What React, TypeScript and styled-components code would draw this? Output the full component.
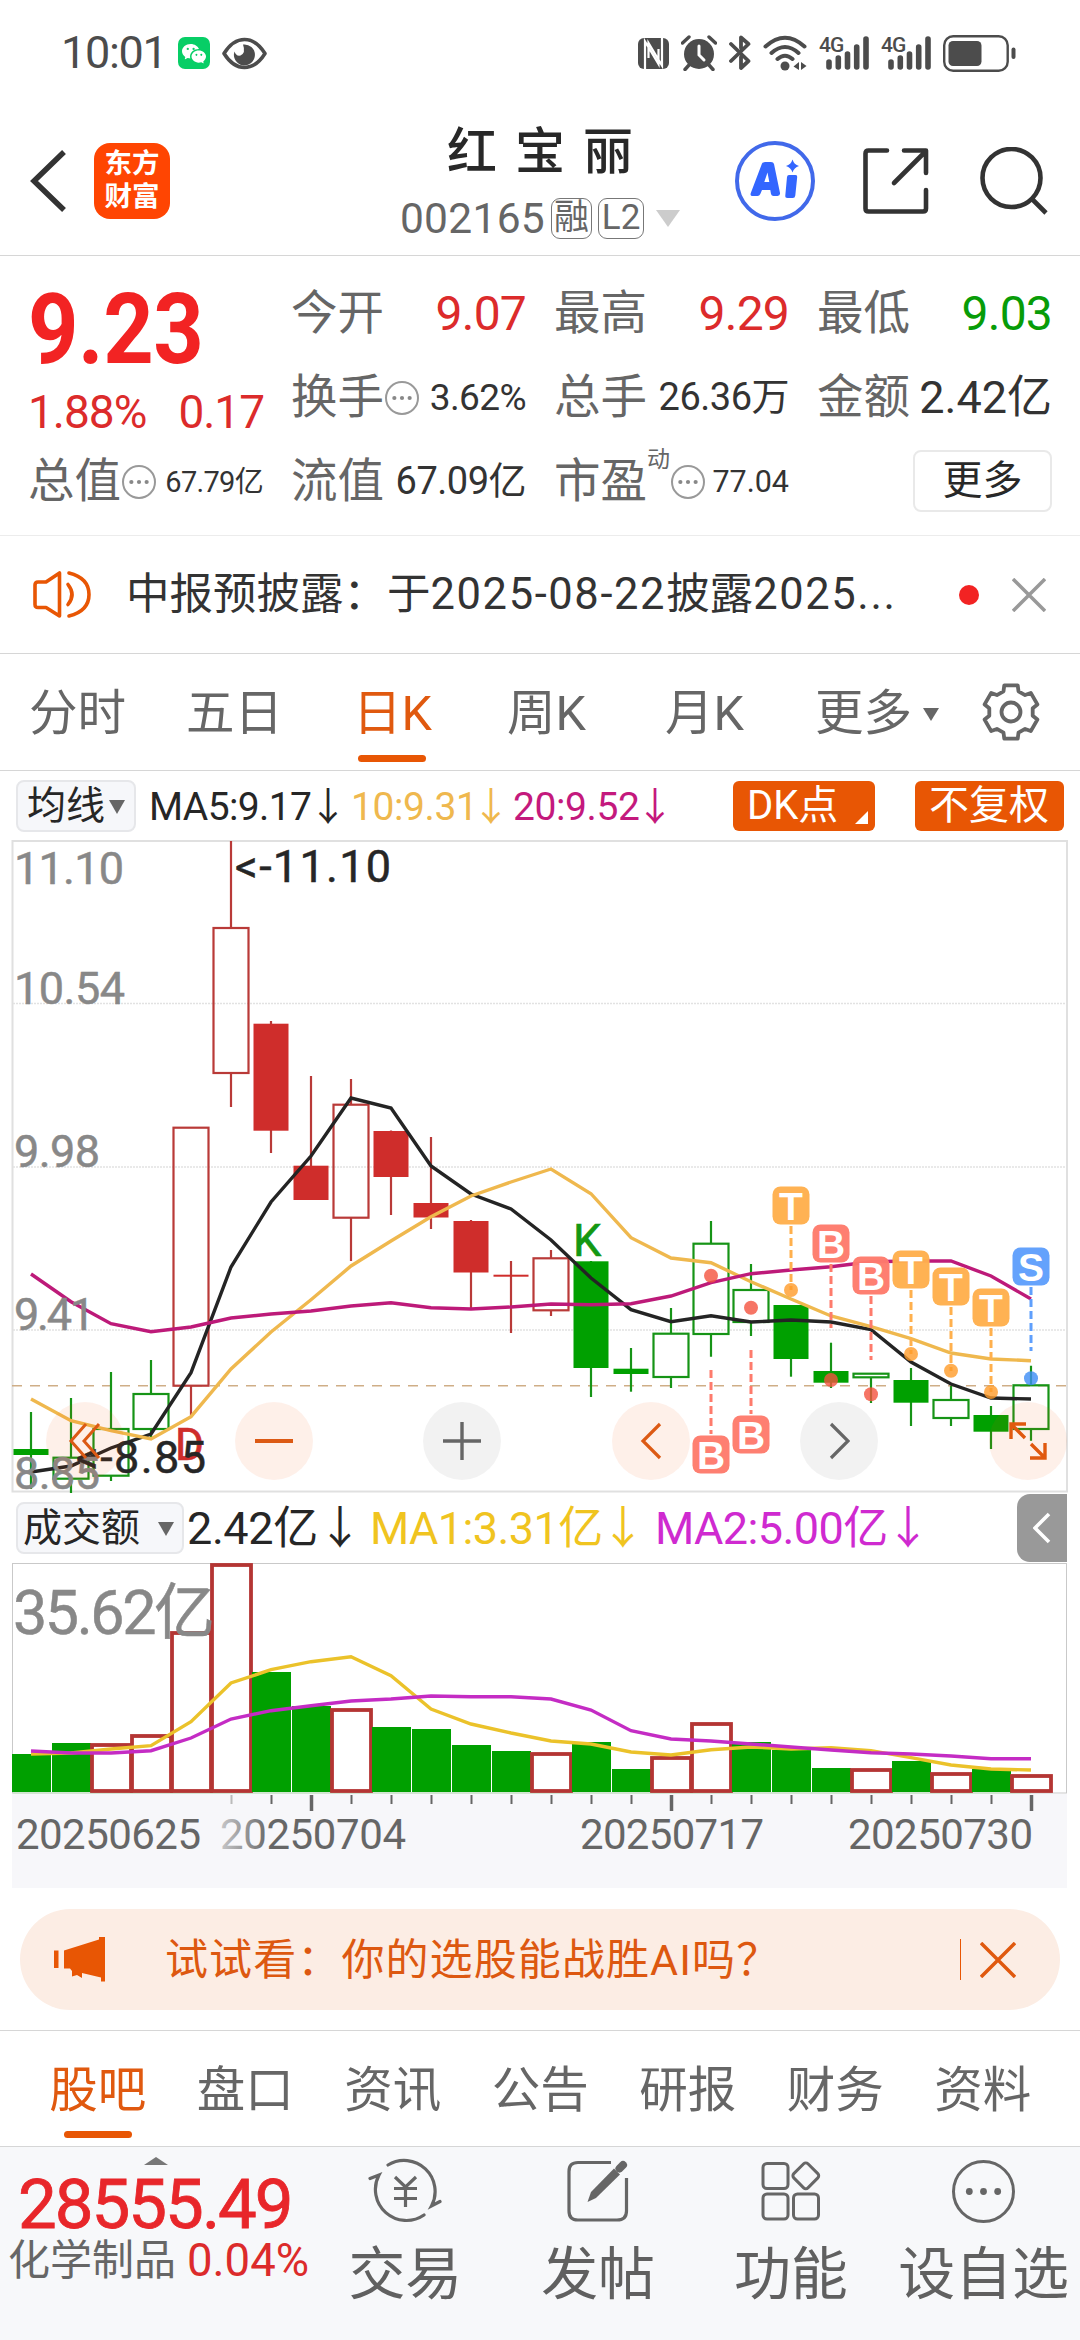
import React from 'react';
import styled, { createGlobalStyle } from 'styled-components';
import { BsWechat } from 'react-icons/bs';

const FONT = `Roboto, "Noto Sans CJK SC", sans-serif`;
const ORANGE = '#e85604';
const RED = '#cf2d2b';
const GREEN = '#00a000';
const GRAY = '#666666';

const Global = createGlobalStyle`
  * { box-sizing: border-box; }
  body { margin: 0; background: #fff; font-family: ${FONT}; color: #282828; }
  svg { display: block; flex: none; }
`;

const Screen = styled.main`
  width: 1080px;
  height: 2340px;
  display: flex;
  flex-direction: column;
  background: #fff;
  overflow: hidden;
`;

const Txt = styled.span<{ $s: number; $c?: string; $ls?: number; $w?: number; $b?: number }>`
  font-size: ${p => p.$s}px;
  color: ${p => p.$c || '#333'};
  letter-spacing: ${p => p.$ls || 0}px;
  font-weight: ${p => p.$b || 400};
  width: ${p => (p.$w ? `${p.$w}px` : 'auto')};
  line-height: 1.2;
  white-space: nowrap;
  flex: none;
`;

/* status bar */
const StatusBar = styled.header`
  height: 106px;
  display: flex;
  align-items: center;
  padding: 0 64px 0 61px;
`;
const Time = styled(Txt)`
  width: 117px;
`;
const WeChat = styled.span`
  width: 32px;
  height: 32px;
  border-radius: 7px;
  background: #07ce66;
  color: #fff;
  display: flex;
  align-items: center;
  justify-content: center;
  margin-right: 11px;
`;
const StatusRight = styled.div`
  margin-left: auto;
  display: flex;
  align-items: center;
  gap: 12px;
`;

/* title bar */
const TitleBar = styled.div`
  height: 150px;
  display: flex;
  border-bottom: 1px solid #d6d6d6;
`;
const BarSide = styled.div<{ $left?: boolean }>`
  width: 345px;
  display: flex;
  align-items: center;
  padding-left: ${p => (p.$left ? 30 : 0)}px;
`;
const AppLogo = styled.div`
  width: 76px;
  height: 76px;
  margin-left: 28px;
  border-radius: 16px;
  background: #ff4502;
  color: #fff;
  font-size: 27.5px;
  font-weight: 700;
  line-height: 33px;
  padding-top: 4px;
  text-align: center;
`;
const TitleMid = styled.div`
  flex: 1;
  display: flex;
  flex-direction: column;
  align-items: center;
  padding-top: 14px;
`;
const StockName = styled.h1`
  margin: 0;
  height: 60px;
  line-height: 65px;
  font-size: 50px;
  font-weight: 500;
  letter-spacing: 18px;
  padding-left: 18px;
`;
const CodeRow = styled.div`
  margin-top: 17px;
  height: 42px;
  display: flex;
  align-items: center;
`;
const Tag = styled.span<{ $w: number }>`
  width: ${p => p.$w}px;
  height: 41px;
  margin-left: 6px;
  border: 1.5px solid #777;
  border-radius: 9px;
  display: flex;
  align-items: center;
  justify-content: center;
  font-size: 35px;
  line-height: 38px;
  color: ${GRAY};
`;
const IconGap = styled.span<{ $w: number }>`
  width: ${p => p.$w}px;
`;

/* quote */
const Quote = styled.section`
  height: 280px;
  padding: 16px 0 0 28px;
  display: grid;
  grid-template-columns: repeat(4, 263px);
  grid-template-rows: repeat(3, 84px);
  border-bottom: 1px solid #ececec;
`;
const Price = styled.div`
  grid-row: 1 / span 2;
  padding-top: 15px;
`;
const BigPrice = styled.div`
  height: 84px;
  line-height: 84px;
  font-size: 99px;
  font-weight: 700;
  letter-spacing: -0.5px;
  transform: scaleX(0.89);
  transform-origin: 0 50%;
  color: #f22323;
`;
const Change = styled.div`
  height: 68px;
  line-height: 82px;
  display: flex;
  gap: 32px;
  font-size: 46px;
  letter-spacing: -1px;
  color: #dc2b2b;
`;
const Stat = styled.div`
  width: 235px;
  display: flex;
  align-items: center;
  & > :last-child {
    margin-left: auto;
  }
`;
const Sup = styled(Txt)`
  align-self: flex-start;
  margin-top: 6px;
`;
const MoreBtn = styled.button`
  width: 139px;
  height: 62px;
  margin-top: -3px;
  border: 2px solid #e9e9e9;
  border-radius: 8px;
  background: #fff;
  font: 40px/58px ${FONT};
  color: #282828;
  padding: 0;
`;

/* notice */
const Notice = styled.section`
  height: 118px;
  display: flex;
  align-items: center;
  padding: 0 34px 0 33px;
  border-bottom: 1px solid #d6d6d6;
`;
const NoticeText = styled(Txt)`
  margin: 1px 0 0 35px;
`;
const Spaced = styled.span`
  letter-spacing: 1.6px;
`;
const RedDot = styled.i`
  width: 20px;
  height: 20px;
  border-radius: 50%;
  background: #f22323;
  margin: 0 33px 0 auto;
`;

/* tabs */
const Tabs = styled.nav<{ $pad: number }>`
  height: 117px;
  display: flex;
  padding-left: ${p => p.$pad}px;
  border-bottom: 1px solid #d6d6d6;
`;
const Tab = styled.div<{ $w: number; $on?: boolean; $center?: boolean; $top?: number }>`
  width: ${p => p.$w}px;
  position: relative;
  display: flex;
  align-items: center;
  justify-content: ${p => (p.$center ? 'center' : 'flex-start')};
  font-size: 48.5px;
  line-height: 1.2;
  color: ${p => (p.$on ? '#e0590f' : GRAY)};
  padding-top: ${p => (p.$top === undefined ? 5 : p.$top)}px;
`;
const Underline = styled.i<{ $l: number }>`
  position: absolute;
  left: ${p => p.$l}px;
  bottom: 8px;
  width: 68px;
  height: 7px;
  border-radius: 4px;
  background: ${ORANGE};
`;

/* indicator strips */
const Strip = styled.div`
  height: 69px;
  display: flex;
  align-items: center;
  padding-left: 16px;
`;
const Pill = styled.div<{ $w: number; $gap: number }>`
  width: ${p => p.$w}px;
  height: 52px;
  border: 2px solid #e6e7ea;
  border-radius: 8px;
  background: #f6f7fa;
  padding: 2px 0 0 ${p => (p.$w > 140 ? 5 : 9)}px;
  display: flex;
  align-items: center;
  gap: ${p => p.$gap}px;
`;
const Reading = styled.div<{ $c: string; $w: number; $s: number; $ml: number; $ls: number }>`
  width: ${p => p.$w}px;
  margin-left: ${p => p.$ml}px;
  padding-top: 3px;
  display: flex;
  align-items: center;
  justify-content: space-between;
  color: ${p => p.$c};
  font-size: ${p => p.$s}px;
  letter-spacing: ${p => p.$ls}px;
  line-height: 1.2;
  white-space: nowrap;
`;
const DownMark = styled.span`
  width: 22px;
  display: flex;
  justify-content: center;
  letter-spacing: 0;
`;
const FlagBtn = styled.button<{ $w: number; $ml: string; $pad: number }>`
  position: relative;
  width: ${p => p.$w}px;
  height: 50px;
  margin-left: ${p => p.$ml};
  padding: 0 0 0 ${p => p.$pad}px;
  border: 0;
  border-radius: 6px;
  background: ${ORANGE};
  color: #fff;
  text-align: left;
  font: 40px/50px ${FONT};
  white-space: nowrap;
`;
const Corner = styled.i`
  position: absolute;
  right: 7px;
  bottom: 7px;
  border-left: 13px solid transparent;
  border-bottom: 13px solid #fff;
`;
const SideHandle = styled.div`
  width: 50px;
  height: 68px;
  margin: 1px 13px 0 auto;
  border-radius: 13px 0 0 13px;
  background: #999;
  display: flex;
  align-items: center;
  justify-content: center;
`;

/* chart */
const ChartArea = styled.section`
  position: relative;
  height: 653px;
`;
const Controls = styled.div`
  position: absolute;
  left: 46px;
  width: 1021px;
  top: 562px;
  display: flex;
  justify-content: space-between;
`;
const RoundBtn = styled.button<{ $gray?: boolean }>`
  width: 78px;
  height: 78px;
  border: 0;
  padding: 0;
  border-radius: 50%;
  background: ${p => (p.$gray ? 'rgba(0,0,0,.05)' : 'rgba(240,86,4,.085)')};
  display: flex;
  align-items: center;
  justify-content: center;
`;

/* banner */
const Banner = styled.section`
  height: 101px;
  margin: 21px 20px 20px;
  border-radius: 51px;
  background: #fcede4;
  display: flex;
  align-items: center;
  padding: 0 44px 0 33px;
`;
const BannerText = styled(Txt)`
  margin: 2px 0 0 59px;
`;
const BannerRule = styled.i`
  width: 1px;
  height: 41px;
  background: ${ORANGE};
  margin: 0 19px 0 auto;
`;
const LowerTabs = styled(Tabs)`
  border-top: 1px solid #d6d6d6;
`;

/* bottom bar */
const BottomBar = styled.footer`
  flex: 1;
  background: #f7f8fa;
  display: flex;
`;
const IndexBox = styled.div`
  width: 309px;
  padding-left: 8px;
  display: flex;
  flex-direction: column;
`;
const IndexTop = styled.div`
  height: 18px;
  padding: 10px 0 0 136px;
`;
const IndexValue = styled.div`
  height: 76px;
  line-height: 79px;
  font-size: 69px;
  letter-spacing: -2px;
  color: #e8262a;
  -webkit-text-stroke: 0.8px #e8262a;
  padding-left: 10px;
`;
const IndexName = styled.div`
  height: 40px;
  display: flex;
  align-items: center;
  gap: 11px;
`;
const Action = styled.div`
  width: 193px;
  display: flex;
  flex-direction: column;
  align-items: center;
  padding-top: 8px;
  font-size: 57px;
  line-height: 70px;
  color: #606060;
  white-space: nowrap;
`;
const ActionIcon = styled.div`
  height: 72px;
  margin-bottom: 13px;
  display: flex;
  align-items: center;
`;

const Dots = ({ r = 17, w = 2 }: { r?: number; w?: number }) => (
  <svg width={r * 2 + 2} height={r * 2 + 2} viewBox={`${-r - 1} ${-r - 1} ${r * 2 + 2} ${r * 2 + 2}`}>
    <circle r={r - w / 2} fill="none" stroke={r > 20 ? GRAY : '#999'} strokeWidth={w} />
    {[-1, 0, 1].map(i => (
      <circle key={i} cx={i * r * 0.45} r={r > 20 ? 3.4 : 2.1} fill={r > 20 ? GRAY : '#888'} />
    ))}
  </svg>
);
const Tri = ({ w = 16, h = 14, c = GRAY }: { w?: number; h?: number; c?: string }) => (
  <svg width={w} height={h}>
    <path d={`M0 0H${w}L${w / 2} ${h}Z`} fill={c} />
  </svg>
);
const Cross = ({ s, c, w }: { s: number; c: string; w: number }) => (
  <svg width={s} height={s} fill="none" stroke={c} strokeWidth={w}>
    <path d={`M1 1L${s - 1} ${s - 1}M${s - 1} 1L1 ${s - 1}`} />
  </svg>
);
const SignalIcon = () => (
  <svg width="50" height="43" viewBox="0 -4 50 43" fontFamily="Roboto">
    <text x="0" y="16" fontSize="21" fontWeight="500" fill="#4c4c4c" letterSpacing="-1">
      4G
    </text>
    <g stroke="#4c4c4c" strokeWidth="5.6" strokeLinecap="round">
      <path d="M10 26V31M19.3 22V31M28.5 18V31M37.7 11V31M47 3V31" />
    </g>
  </svg>
);

const cx = (i: number) => 31 + 40 * i;
// [colour, hollow, high, low, top, bottom]
const candles: [string, number, number, number, number, number][] = [
  ['g', 0, 1413, 1490, 1450, 1456],
  ['g', 1, 1399, 1494, 1458.7, 1479.7],
  ['g', 1, 1373, 1482, 1430, 1476.7],
  ['g', 1, 1361, 1440, 1395, 1430],
  ['r', 1, 1128.7, 1417, 1128.7, 1386.7],
  ['r', 1, 842, 1108, 929, 1074],
  ['r', 0, 1022, 1154, 1024.7, 1131.7],
  ['r', 0, 1077, 1201, 1166.7, 1201],
  ['r', 1, 1080, 1262, 1105.7, 1218.7],
  ['r', 0, 1131.5, 1216, 1132, 1178],
  ['r', 0, 1138, 1230, 1204, 1218.5],
  ['r', 0, 1221, 1310, 1222, 1273.5],
  ['r', 0, 1262, 1334, 1275.7, 1277.7],
  ['r', 1, 1251, 1317, 1259.3, 1311.3],
  ['g', 0, 1262, 1398, 1262.3, 1369],
  ['g', 0, 1349, 1392.7, 1369.7, 1375],
  ['g', 1, 1309, 1389, 1334.7, 1378],
  ['g', 1, 1222, 1357.7, 1244.7, 1335],
  ['g', 1, 1265, 1337, 1291, 1323],
  ['g', 0, 1306, 1377.7, 1306, 1360],
  ['g', 0, 1343.7, 1389, 1372, 1383.7],
  ['g', 1, 1374.7, 1404, 1374.7, 1378.3],
  ['g', 0, 1369, 1427, 1381, 1403.7],
  ['g', 1, 1387, 1427, 1401, 1419],
  ['g', 0, 1407, 1450, 1416, 1432.7],
  ['g', 1, 1366.7, 1441.7, 1386.3, 1430],
];
const ma5 = [1473, 1467, 1449, 1435, 1373.7, 1268, 1203, 1157, 1099, 1109, 1167, 1195, 1210, 1241, 1279, 1310.7, 1322.7, 1316.7, 1323, 1321, 1323, 1330.7, 1363, 1385, 1399, 1400];
const ma10 = [1400, 1421.7, 1431.7, 1440, 1417.7, 1370, 1333, 1300.7, 1267, 1242, 1217.7, 1197, 1183, 1170, 1194.7, 1238.7, 1259, 1263.7, 1282.7, 1300, 1317, 1327.7, 1339.7, 1354, 1360, 1361.7];
const ma20 = [1275, 1302.7, 1324.7, 1332.7, 1328, 1319, 1315, 1312, 1307, 1303.7, 1308.7, 1310, 1308, 1305, 1305.7, 1304.7, 1297, 1283.7, 1274.7, 1271, 1267.7, 1262.7, 1262, 1262, 1277, 1300];
const vol: [string, number][] = [
  ['g', 1755], ['g', 1744], ['r', 1744], ['r', 1735], ['r', 1632], ['r', 1564], ['g', 1673], ['g', 1707], ['r', 1709],
  ['g', 1728], ['g', 1730], ['g', 1746], ['g', 1752], ['r', 1753], ['g', 1743], ['g', 1770], ['r', 1757], ['r', 1723],
  ['g', 1743], ['g', 1751], ['g', 1769], ['r', 1769], ['g', 1762], ['r', 1773], ['g', 1770], ['r', 1775],
];
const vma1 = [1755, 1754, 1750, 1746.7, 1722.7, 1684, 1670.7, 1662.7, 1657.7, 1676.7, 1710, 1725, 1734, 1742, 1745, 1753, 1756, 1750.7, 1748, 1750, 1748.7, 1751.7, 1758.7, 1766, 1770, 1771];
const vma2 = [1752, 1754, 1754, 1751.7, 1739, 1720, 1711.7, 1706.7, 1702, 1700, 1697, 1697.7, 1697.7, 1700, 1711, 1731.7, 1740, 1742, 1745, 1748, 1751, 1753.7, 1755, 1757, 1759.7, 1759.7];
const pts = (a: number[]) => a.map((y, i) => `${cx(i)},${y}`).join(' ');

// [letter, candle index, badge centre y, dash start, dash end, dot y]
const marks: [string, number, number, number, number, number][] = [
  ['T', 19, 1206.5, 1227, 1291, 1291],
  ['B', 20, 1244.5, 1265, 1329, 1381],
  ['B', 21, 1276.5, 1297, 1361, 1395.3],
  ['T', 22, 1270.5, 1291, 1355, 1355],
  ['T', 23, 1287.5, 1308, 1372, 1371.7],
  ['T', 24, 1308.5, 1329, 1393, 1393],
  ['S', 25, 1267.5, 1288, 1352, 1379.3],
  ['B', 17, 1455.5, 1371, 1435, 1276.7],
  ['B', 18, 1435.5, 1351, 1415, 1308.7],
];
const markColor: Record<string, [string, string]> = {
  T: ['#ffb04d', '#ff9b28'],
  B: ['#fe7b6c', '#f4523f'],
  S: ['#5f9ffc', '#3c8cf5'],
};
const labels: [string, number, number][] = [
  ['11.10', 885, 107], ['10.54', 1005, 108], ['9.98', 1168, 83], ['9.41', 1331, 78], ['8.85', 1490, 83],
];

const PriceChart = () => (
  <svg width="1080" height="653" viewBox="0 841 1080 653" fontFamily={FONT}>
    <rect x="12.5" y="842" width="1054.5" height="650.5" fill="none" stroke="#e0e0e0" strokeWidth="2" />
    {[1004.5, 1168, 1331].map(y => (
      <path key={y} d={`M13 ${y}H1066`} stroke="#e2e2e2" strokeWidth="1.3" strokeDasharray="2 1" />
    ))}
    <path d="M12 1386.7H1067" stroke="#cfae87" strokeWidth="1.6" strokeDasharray="10 8" />
    {candles.map(([c, hollow, hi, lo, t, b], i) => {
      const col = c === 'g' ? '#169416' : '#b93a38';
      return (
        <g key={i}>
          <path d={hollow ? `M${cx(i)} ${hi}V${t}M${cx(i)} ${b}V${lo}` : `M${cx(i)} ${hi}V${lo}`} stroke={col} strokeWidth="2.2" />
          {hollow ? (
            <rect x={cx(i) - 17.5} y={t} width="35" height={b - t} fill="none" stroke={col} strokeWidth="2.2" />
          ) : (
            <rect x={cx(i) - 17.5} y={t} width="35" height={b - t} fill={c === 'g' ? GREEN : RED} />
          )}
        </g>
      );
    })}
    <g fill="none" strokeWidth="3.4">
      <polyline points={pts(ma5)} stroke="#242424" />
      <polyline points={pts(ma10)} stroke="#efb84e" />
      <polyline points={pts(ma20)} stroke="#bd1a79" />
    </g>
    <text x="175" y="1461" fontSize="44" fill={RED} stroke={RED} strokeWidth="0.7">D</text>
    <text x="573" y="1257" fontSize="45" fill="#139813" stroke="#139813" strokeWidth="0.7">K</text>
    {marks.map(([l, i, y, a, b, d]) => (
      <g key={i}>
        <path d={`M${cx(i)} ${a}V${b}`} stroke={markColor[l][0]} strokeWidth="3" strokeDasharray="8 4" />
        <circle cx={cx(i)} cy={d} r="7" fill={markColor[l][1]} opacity=".8" />
        <rect x={cx(i) - 18.5} y={y - 19} width="37" height="38" rx="8" fill={markColor[l][0]} fillOpacity=".97" />
        <text x={cx(i)} y={y + 14} fontSize="39" fontWeight="700" fill="#fff" textAnchor="middle" fontFamily="Liberation Sans">
          {l}
        </text>
      </g>
    ))}
    {labels.map(([t, y, w]) => (
      <text key={t} x="14" y={y} fontSize="45" fill="#888" stroke="#888" strokeWidth="0.5" textLength={w + 3}>
        {t}
      </text>
    ))}
    <g fill="#262626" stroke="#262626" strokeWidth="0.5" fontSize="45">
      <text x="235" y="883" textLength="156">&lt;-11.10</text>
      <text x="76" y="1474" textLength="130">&lt;-8.85</text>
    </g>
  </svg>
);

const VolumeChart = () => (
  <svg width="1080" height="326" viewBox="0 1563 1080 326" fontFamily={FONT}>
    <defs>
      <linearGradient id="fade" gradientUnits="userSpaceOnUse" x1="218" y1="0" x2="270" y2="0">
        <stop offset="0" stopColor="#666" stopOpacity=".3" />
        <stop offset="1" stopColor="#666" />
      </linearGradient>
    </defs>
    <rect x="12" y="1795" width="1055" height="94" fill="#f7f7fa" />
    <rect x="12.5" y="1564.5" width="1054" height="229.5" fill="#fff" stroke="#c9c9c9" />
    <path d="M13 1794H1031" stroke="#bfe6bf" />
    {vol.map(([c, t], i) =>
      c === 'g' ? (
        <rect key={i} x={cx(i) - 19} y={t} width="39" height={1793 - t} fill={GREEN} />
      ) : (
        <rect key={i} x={cx(i) - 19} y={t + 2} width="39" height={1792 - t - 2} fill="#fff" stroke="#b43533" strokeWidth="3.8" />
      ),
    )}
    <g fill="none" strokeWidth="3.4">
      <polyline points={pts(vma1)} stroke="#ebc22a" />
      <polyline points={pts(vma2)} stroke="#c42cc4" />
    </g>
    <text x="13" y="1635" fontSize="61" fill="#888" stroke="#888" strokeWidth="0.5" textLength="202">35.62亿</text>
    {vol.map((_, i) => {
      if (i < 5) return null;
      const major = i === 7 || i === 16 || i === 25;
      return <path key={i} d={`M${cx(i) + 0.5} 1796V${major ? 1812 : 1805}`} stroke={i === 5 ? '#bbb' : GRAY} strokeWidth={major ? 3.5 : 2} />;
    })}
    <g fontSize="42" fill={GRAY}>
      <text x="16" y="1850" textLength="185">20250625</text>
      <text x="220" y="1850" textLength="186" fill="url(#fade)">20250704</text>
      <text x="580" y="1850" textLength="184">20250717</text>
      <text x="848" y="1850" textLength="185">20250730</text>
    </g>
  </svg>
);

const gearPath = (() => {
  const out: string[] = [];
  for (let k = 0; k < 6; k++) {
    const base = -90 + k * 60;
    [[-14, 27.5], [14, 27.5], [20, 22], [40, 22]].forEach(([da, r]) => {
      const a = ((base + da) * Math.PI) / 180;
      out.push(`${(30 + r * Math.cos(a)).toFixed(1)} ${(30 + r * Math.sin(a)).toFixed(1)}`);
    });
  }
  return `M${out.join('L')}Z`;
})();

export default function App() {
  return (
    <Screen>
      <Global />
      <StatusBar>
        <Time $s={45} $c="#4c4c4c" $ls={-1.3}>10:01</Time>
        <WeChat><BsWechat size={24} /></WeChat>
        <svg width="47" height="33" viewBox="0 0 47 33">
          <path d="M3 16.5C9 7 16 2.500 23.500 2.500S38 7 44 16.500C38 26 31 30.500 23.500 30.500S9 26 3 16.500Z" fill="none" stroke="#4c4c4c" strokeWidth="3.600" strokeLinejoin="round" />
          <path d="M22 7.500A10.500 10.500 0 1 1 13.500 14.500Q15 19.500 19.500 18.500Q25 16 22 7.500Z" fill="#4c4c4c" />
        </svg>
        <StatusRight>
          <svg width="31" height="33" viewBox="0 0 31 33">
            <rect y="1" width="31" height="31" rx="6" fill="#4c4c4c" />
            <path d="M7 33V4.500L20.500 27V12M24 0V28.500L10.500 6V21" fill="none" stroke="#fff" strokeWidth="2.200" />
          </svg>
          <svg width="36" height="36" viewBox="0 0 36 36">
            <circle cx="18" cy="19" r="15" fill="#4c4c4c" />
            <path d="M18 11V20L23 25" stroke="#fff" strokeWidth="3" fill="none" strokeLinecap="round" />
            <path d="M1.500 8L8 2M34.500 8L28 2M8 30L4 34.500M28 30L32 34.500" stroke="#4c4c4c" strokeWidth="3.400" strokeLinecap="round" />
          </svg>
          <svg width="22" height="36" viewBox="0 0 22 36" fill="none" stroke="#4c4c4c" strokeWidth="3.800" strokeLinecap="round" strokeLinejoin="round">
            <path d="M2 9L19.500 26L12 33V22M2 26L19.500 9L12 2.500V13" />
          </svg>
          <svg width="44" height="36" viewBox="0 0 44 36" fill="none" stroke="#4c4c4c" strokeWidth="4" strokeLinecap="round">
            <path d="M2.500 11.500Q22 -6 41.500 11.500M8.500 18Q22 6 35.500 18M14.500 24Q22 17.500 29.500 24" />
            <circle cx="22" cy="31" r="4.500" fill="#4c4c4c" stroke="none" />
            <path d="M36 27V35L30.500 31.500ZM38 27V35L43.500 31Z" fill="#4c4c4c" stroke="none" />
          </svg>
          <SignalIcon />
          <SignalIcon />
          <svg width="73" height="37" viewBox="0 0 73 37">
            <rect x="1.200" y="1.200" width="63.500" height="34.500" rx="9" fill="none" stroke="#4c4c4c" strokeWidth="2.400" />
            <rect x="5.500" y="6" width="33" height="25" rx="4.500" fill="#4c4c4c" />
            <rect x="68.500" y="12.500" width="4" height="11.500" rx="2" fill="#4c4c4c" />
          </svg>
        </StatusRight>
      </StatusBar>

      <TitleBar>
        <BarSide $left>
          <svg width="36" height="64" viewBox="0 0 36 64" fill="none" stroke="#333" strokeWidth="5.500">
            <path d="M34 3L4 32L34 61" />
          </svg>
          <AppLogo>东方<br />财富</AppLogo>
        </BarSide>
        <TitleMid>
          <StockName>红宝丽</StockName>
          <CodeRow>
            <Txt $s={42.5} $c={GRAY} $ls={0.3}>002165</Txt>
            <Tag $w={41}>融</Tag>
            <Tag $w={46}>L2</Tag>
            <IconGap $w={12} />
            <Tri w={24} h={17} c="#ccc" />
          </CodeRow>
        </TitleMid>
        <BarSide>
          <svg width="80" height="80" viewBox="0 0 80 80">
            <circle cx="40" cy="40" r="38" fill="none" stroke="#4169ea" strokeWidth="4" />
            <path d="M27 22.500Q28 21 30 21H36Q38.500 21 39 23L45 52Q45.300 55 42.500 55H38.500Q36.500 55 36 53L35.300 49H27L25.300 53Q24.500 55 22.500 55H17.500Q14.800 55 15.800 52ZM32.500 31.500L29.300 41H34.300Z" fill="#3366ff" fillRule="evenodd" />
            <path d="M54 34H60.500Q62.500 34 62.200 36L60.300 54.500Q60 57 57.800 57H52.500Q50 57 50.300 54.500L52 36Q52.200 34 54 34Z" fill="#3366ff" />
            <path d="M57.500 18.500Q59 23.500 64 25Q59 26.500 57.500 31.500Q56 26.500 51 25Q56 23.500 57.500 18.500Z" fill="#3366ff" />
          </svg>
          <IconGap $w={48} />
          <svg width="66" height="66" viewBox="0 0 66 66" fill="none" stroke="#333" strokeWidth="4.600" strokeLinecap="round" strokeLinejoin="round">
            <path d="M24 2.500H5.500Q2.500 2.500 2.500 5.500V60.500Q2.500 63.500 5.500 63.500H60Q63 63.500 63 60.500V42M41 2.500H63V25M62 4L31 35" />
          </svg>
          <IconGap $w={51} />
          <svg width="68" height="68" viewBox="0 0 68 68" fill="none" stroke="#333" strokeWidth="4.600">
            <circle cx="31.500" cy="31" r="29" />
            <path d="M51 51L66 66" />
          </svg>
        </BarSide>
      </TitleBar>

      <Quote>
        <Price>
          <BigPrice>9.23</BigPrice>
          <Change><span>1.88%</span><span>0.17</span></Change>
        </Price>
        <Stat><Txt $s={46.5} $c={GRAY}>今开</Txt><Txt $s={48} $ls={-0.8} $c="#dc2b2b">9.07</Txt></Stat>
        <Stat><Txt $s={46.5} $c={GRAY}>最高</Txt><Txt $s={48} $ls={-0.8} $c="#dc2b2b">9.29</Txt></Stat>
        <Stat><Txt $s={46.5} $c={GRAY}>最低</Txt><Txt $s={48} $ls={-0.8} $c="#089c08">9.03</Txt></Stat>
        <Stat><Txt $s={46.5} $c={GRAY}>换手</Txt><Dots /><Txt $s={37} $ls={-0.6}>3.62%</Txt></Stat>
        <Stat><Txt $s={46.5} $c={GRAY}>总手</Txt><Txt $s={38} $ls={-0.5}>26.36万</Txt></Stat>
        <Stat><Txt $s={46.5} $c={GRAY}>金额</Txt><Txt $s={45}>2.42亿</Txt></Stat>
        <Stat><Txt $s={46.5} $c={GRAY}>总值</Txt><Dots /><Txt $s={29} $ls={-0.7}>67.79亿</Txt></Stat>
        <Stat><Txt $s={46.5} $c={GRAY}>流值</Txt><Txt $s={38} $ls={-0.5}>67.09亿</Txt></Stat>
        <Stat><Txt $s={46.5} $c={GRAY}>市盈</Txt><Sup $s={23} $c={GRAY}>动</Sup><Dots /><Txt $s={30.5}>77.04</Txt></Stat>
        <Stat><MoreBtn>更多</MoreBtn></Stat>
      </Quote>

      <Notice>
        <svg width="58" height="50" viewBox="0 0 58 50" fill="none" stroke={ORANGE} strokeWidth="3.600" strokeLinejoin="round" strokeLinecap="round">
          <path d="M26.500 3V46L13 37.500H5Q2 37.500 2 34.500V15Q2 12 5 12H13Z" />
          <path d="M35 14.500Q43 24.500 35 34.500M36 3Q56 8 56 24.500T36 46" />
        </svg>
        <NoticeText $s={43.5}>中报预披露：于<Spaced>2025-08-22</Spaced>披露<Spaced>2025...</Spaced></NoticeText>
        <RedDot />
        <Cross s={34} c="#999" w={3.5} />
      </Notice>

      <Tabs $pad={29}>
        <Tab $w={157}>分时</Tab>
        <Tab $w={167}>五日</Tab>
        <Tab $w={154} $on>日K<Underline $l={5} /></Tab>
        <Tab $w={158}>周K</Tab>
        <Tab $w={150}>月K</Tab>
        <Tab $w={166}>更多<IconGap $w={11} /><Tri w={16} h={13} /></Tab>
        <Tab $w={60} $top={0}>
          <svg width="60" height="60" viewBox="0 0 60 60" fill="none" stroke={GRAY} strokeWidth="3.800" strokeLinejoin="round">
            <path d={gearPath} />
            <circle cx="30" cy="30" r="9.500" />
          </svg>
        </Tab>
      </Tabs>

      <Strip>
        <Pill $w={120} $gap={4}><Txt $s={39} $c="#262626">均线</Txt><Tri /></Pill>
        <Reading $c="#262626" $w={190} $s={39} $ml={13} $ls={-0.6}>MA5:9.17<DownMark>↓</DownMark></Reading>
        <Reading $c="#efb84e" $w={151} $s={39} $ml={12} $ls={-0.4}>10:9.31<DownMark>↓</DownMark></Reading>
        <Reading $c="#c4197d" $w={153} $s={39} $ml={11} $ls={-0.4}>20:9.52<DownMark>↓</DownMark></Reading>
        <FlagBtn $w={142} $ml="67px" $pad={14}>DK点<Corner /></FlagBtn>
        <FlagBtn $w={149} $ml="40px" $pad={14}>不复权</FlagBtn>
      </Strip>

      <ChartArea>
        <PriceChart />
        <Controls>
          <RoundBtn>
            <svg width="34" height="38" viewBox="0 0 34 38" fill="none" stroke="#dc5a14" strokeWidth="3">
              <path d="M18 2L3 19L18 36M31 2L16 19L31 36" />
            </svg>
          </RoundBtn>
          <RoundBtn><svg width="38" height="4"><path d="M0 2H38" stroke="#dc5a14" strokeWidth="4" /></svg></RoundBtn>
          <RoundBtn $gray><svg width="38" height="38"><path d="M0 19H38M19 0V38" stroke={GRAY} strokeWidth="3.400" /></svg></RoundBtn>
          <RoundBtn><svg width="22" height="38" fill="none"><path d="M20 2L3 19L20 36" stroke="#dc5a14" strokeWidth="3.200" /></svg></RoundBtn>
          <RoundBtn $gray><svg width="22" height="38" fill="none"><path d="M3 2L20 19L3 36" stroke={GRAY} strokeWidth="3.200" /></svg></RoundBtn>
          <RoundBtn>
            <svg width="38" height="38" viewBox="0 0 38 38" fill="none" stroke="#e0590f" strokeWidth="3.400">
              <path d="M2 17V2H17M3 3L16 16M36 21V36H21M35 35L22 22" />
            </svg>
          </RoundBtn>
        </Controls>
      </ChartArea>

      <Strip>
        <Pill $w={168} $gap={18}><Txt $s={39} $c="#262626">成交额</Txt><Tri /></Pill>
        <Reading $c="#262626" $w={164} $s={45} $ml={3} $ls={-0.4}>2.42亿<DownMark>↓</DownMark></Reading>
        <Reading $c="#f0c41f" $w={264} $s={45} $ml={19} $ls={-0.6}>MA1:3.31亿<DownMark>↓</DownMark></Reading>
        <Reading $c="#cf2ad0" $w={264} $s={45} $ml={21} $ls={-0.6}>MA2:5.00亿<DownMark>↓</DownMark></Reading>
        <SideHandle>
          <svg width="18" height="32" fill="none"><path d="M16 2L2 16L16 30" stroke="#fff" strokeWidth="3.600" /></svg>
        </SideHandle>
      </Strip>
      <VolumeChart />

      <Banner>
        <svg width="53" height="46" viewBox="0 0 53 46" fill={ORANGE}>
          <path d="M1 13.500H5.500V31H1ZM11 13.500L46 2.500V0H52V44.500H48V40.500L29 36V41L24 38L19 39.500V34L17 31.500H11Z" />
        </svg>
        <BannerText $s={43} $ls={1.1} $c="#dd5810">试试看：你的选股能战胜AI吗？</BannerText>
        <BannerRule />
        <Cross s={36} c="#e0590f" w={3.5} />
      </Banner>

      <LowerTabs $pad={24}>
        {['股吧', '盘口', '资讯', '公告', '研报', '财务', '资料'].map((t, i) => (
          <Tab key={t} $w={147.5} $center $on={i === 0}>
            {t}
            {i === 0 && <Underline $l={40} />}
          </Tab>
        ))}
      </LowerTabs>

      <BottomBar>
        <IndexBox>
          <IndexTop>
            <svg width="24" height="8"><path d="M0 8L12 0L24 8Z" fill="#777" /></svg>
          </IndexTop>
          <IndexValue>28555.49</IndexValue>
          <IndexName>
            <Txt $s={42} $c={GRAY}>化学制品</Txt>
            <Txt $s={45.5} $c="#dc2b2b">0.04%</Txt>
          </IndexName>
        </IndexBox>
        <Action>
          <ActionIcon>
            <svg width="74" height="66" viewBox="0 0 74 66" fill="none" stroke={GRAY} strokeWidth="3.200" strokeLinecap="round">
              <path d="M20 7A31 31 0 0 1 63.500 48L72 43.500M56 57A31 31 0 0 1 11 17L2 20.500" />
              <path d="M27 19L37.500 29L48 19M37.500 29V49M26 30.500H49M26 40.500H49" strokeLinecap="butt" />
            </svg>
          </ActionIcon>
          交易
        </Action>
        <Action>
          <ActionIcon>
            <svg width="62" height="62" viewBox="0 0 62 62" fill="none" stroke={GRAY} strokeWidth="3.200">
              <path d="M44 2.500H11Q2 2.500 2 11.500V51Q2 60 11 60H50Q59.500 60 59.500 51V18" />
              <path d="M56 5L52.500 8.500" strokeWidth="8" strokeLinecap="round" />
              <path d="M47 8.500L53 14.500L29 38L20.500 42L24 32Z" fill={GRAY} stroke="none" />
            </svg>
          </ActionIcon>
          发帖
        </Action>
        <Action>
          <ActionIcon>
            <svg width="60" height="60" viewBox="0 0 60 60" fill="none" stroke={GRAY} strokeWidth="3">
              <rect x="2" y="2.500" width="25" height="25" rx="4" />
              <rect x="2" y="33" width="25" height="25" rx="4" />
              <rect x="32.500" y="33" width="25" height="25" rx="4" />
              <rect x="34.800" y="4.800" width="20" height="20" rx="3" transform="rotate(45 44.800 14.800)" />
            </svg>
          </ActionIcon>
          功能
        </Action>
        <Action>
          <ActionIcon><Dots r={31.5} w={3} /></ActionIcon>
          设自选
        </Action>
      </BottomBar>
    </Screen>
  );
}
